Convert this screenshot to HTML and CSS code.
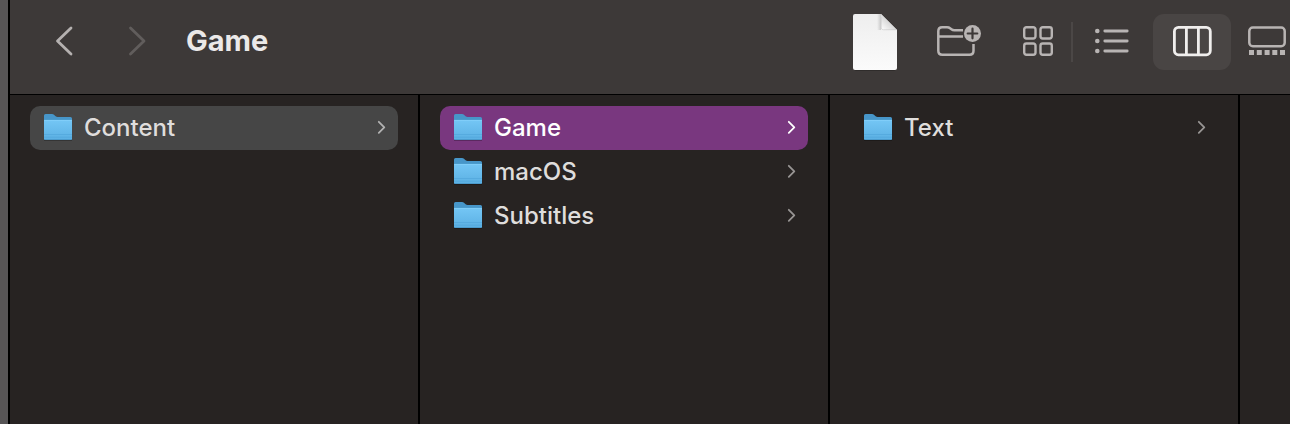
FILE: index.html
```html
<!DOCTYPE html>
<html lang="en">
<head>
<meta charset="utf-8">
<title>Game</title>
<link rel="stylesheet" href="styles.css">
</head>
<body>
<svg class="defs" aria-hidden="true">
  <defs>
    <linearGradient id="front" x1="0" y1="0" x2="0" y2="1">
      <stop offset="0" stop-color="#74c6f5"/>
      <stop offset="1" stop-color="#5bb0e3"/>
    </linearGradient>
    <linearGradient id="paper" x1="0" y1="0" x2="0" y2="1">
      <stop offset="0" stop-color="#eeeeee"/>
      <stop offset="1" stop-color="#fbfbfb"/>
    </linearGradient>
    <linearGradient id="fold" x1="0" y1="1" x2="1" y2="0">
      <stop offset="0" stop-color="#ffffff"/>
      <stop offset=".5" stop-color="#d8d8d8"/>
      <stop offset="1" stop-color="#e4e4e4"/>
    </linearGradient>
    <linearGradient id="shade" x1="1" y1="0" x2="0" y2="0">
      <stop offset="0" stop-color="#000" stop-opacity=".16"/>
      <stop offset="1" stop-color="#000" stop-opacity="0"/>
    </linearGradient>
    <symbol id="folder" viewBox="0 0 30 30">
      <path d="M1 26.500h28v1.200H1z" fill="#000" opacity=".35"/>
      <path d="M1 2.500Q1 1 2.500 1H9q1.200 0 2 .8l1.600 1.400q.9.800 2 .8H27.500Q29 4 29 5.500V20H1z" fill="#4796c9"/>
      <path d="M1 7.500Q1 7 1.800 7H28.200q.8 0 .8.500V25.500Q29 27 27.500 27h-25Q1 27 1 25.500z" fill="url(#front)"/>
      <path d="M1 7.400h28" stroke="#86d0fa" stroke-width=".8"/>
      <path d="M1 21.500h28M1 24.200h28" stroke="#4fa4d8" stroke-width=".6"/>
      <path d="M1.500 26.500h27" stroke="#4a97c8" stroke-width=".9"/>
    </symbol>
    <symbol id="chevron" viewBox="0 0 10 16">
      <path d="M1.800 1.800 7.300 7.300 1.800 12.800" fill="none" stroke="currentColor" stroke-width="1.800" stroke-linecap="round" stroke-linejoin="round"/>
    </symbol>
  </defs>
</svg>
<main class="window">
  <header class="toolbar">
    <nav class="history" aria-label="History">
      <button class="nav" aria-label="Back"><svg width="20" height="32" viewBox="0 0 20 32"><path d="M16 2 2.500 15 16 28" class="line thick"/></svg></button>
      <button class="nav" aria-label="Forward" disabled><svg width="20" height="32" viewBox="0 0 20 32"><path d="M3.500 2 17 15 3.500 28" class="line thick"/></svg></button>
    </nav>
    <h1 class="title">Game</h1>
    <div class="tools">
      <button class="tool document" aria-label="Document">
        <svg width="44" height="58" viewBox="0 0 44 58">
          <path d="M1 3v52.700q0 2 2 2h38q2 0 2-2V18" fill="#000" opacity=".3"/>
          <path d="M2 1H28L44 17V55q0 2-2 2H2q-2 0-2-2V3q0-2 2-2z" fill="url(#paper)"/>
          <path d="M24 1h4v16h-4z" fill="url(#shade)"/>
          <path d="M28 1v14q0 2 2 2h14z" fill="url(#fold)"/>
          <path d="M28.300 4v11q0 1.700 2 1.700h13" fill="none" stroke="#c8c8c8" stroke-width=".6"/>
        </svg>
      </button>
      <button class="tool new-folder" aria-label="New folder">
        <svg width="44" height="34" viewBox="0 0 44 34">
          <path d="M26 5.200H17.500c-1.500 0-2.200-.3-3.100-1l-1.300-.9C12.200 2.500 11.500 2.200 10 2.200H5.200Q1.300 2.200 1.300 6.200V25.800q0 4 4 4h27.200q4 0 4-4V19M1.500 11.500H26" fill="none" stroke="currentColor" stroke-width="2.500"/>
          <circle cx="35.500" cy="8.500" r="8.500" fill="currentColor"/>
          <path d="M35.500 3.700v9.600M30.700 8.500h9.600" stroke="#3d3938" stroke-width="2.200" stroke-linecap="round"/>
        </svg>
      </button>
      <button class="tool grid" aria-label="Icon view">
        <svg width="30" height="32" viewBox="0 0 30 32" class="line">
          <rect x="1.200" y="1.200" width="11.300" height="11.300" rx="2.200"/>
          <rect x="17.500" y="1.200" width="11.300" height="11.300" rx="2.200"/>
          <rect x="1.200" y="17.500" width="11.300" height="11.300" rx="2.200"/>
          <rect x="17.500" y="17.500" width="11.300" height="11.300" rx="2.200"/>
        </svg>
      </button>
      <span class="divider"></span>
      <button class="tool list" aria-label="List view">
        <svg width="34" height="28" viewBox="0 0 34 28">
          <g fill="currentColor"><circle cx="2.300" cy="3" r="2.300"/><circle cx="2.300" cy="13" r="2.300"/><circle cx="2.300" cy="23" r="2.300"/></g>
          <path d="M9.800 3H32.200M9.800 13H32.200M9.800 23H32.200" class="line bars"/>
        </svg>
      </button>
      <button class="tool columns-view" aria-label="Column view" aria-pressed="true">
        <svg width="40" height="34" viewBox="0 0 40 34" class="line thick">
          <rect x="2.400" y="2.400" width="35.900" height="27.400" rx="4"/>
          <path d="M14.400 2.500v27M26.400 2.500v27"/>
        </svg>
      </button>
      <button class="tool gallery" aria-label="Gallery view">
        <svg width="38" height="32" viewBox="0 0 38 32">
          <rect x="1.300" y="1.500" width="35.400" height="18.700" rx="3.500" fill="none" stroke="currentColor" stroke-width="2.500"/>
          <path d="M1 24h5v5H1zM8.800 24h5v5h-5zM16.600 24h5v5h-5zM24.300 24h5v5h-5zM32 24h5v5h-5z" fill="currentColor"/>
        </svg>
      </button>
    </div>
  </header>
  <div class="browser">
    <ul class="column">
      <li><button class="row open"><svg class="icon"><use href="#folder"/></svg><span class="name">Content</span><svg class="chevron"><use href="#chevron"/></svg></button></li>
    </ul>
    <ul class="column">
      <li><button class="row selected"><svg class="icon"><use href="#folder"/></svg><span class="name">Game</span><svg class="chevron"><use href="#chevron"/></svg></button></li>
      <li><button class="row"><svg class="icon"><use href="#folder"/></svg><span class="name">macOS</span><svg class="chevron"><use href="#chevron"/></svg></button></li>
      <li><button class="row"><svg class="icon"><use href="#folder"/></svg><span class="name">Subtitles</span><svg class="chevron"><use href="#chevron"/></svg></button></li>
    </ul>
    <ul class="column">
      <li><button class="row"><svg class="icon"><use href="#folder"/></svg><span class="name">Text</span><svg class="chevron"><use href="#chevron"/></svg></button></li>
    </ul>
    <div class="rest"></div>
  </div>
</main>
</body>
</html>
```
FILE: styles.css
```css
* {
  box-sizing: border-box;
}

body {
  margin: 0;
  background: #575556;
  color: #dfdddc;
  font-family: Inter, Roboto, sans-serif;
}

button {
  padding: 0;
  border: 0;
  background: none;
  color: inherit;
  font: inherit;
}

svg {
  display: block;
  flex: none;
}

.defs {
  position: absolute;
  width: 0;
  height: 0;
}

.line {
  fill: none;
  stroke: currentColor;
  stroke-width: 2.4px;
  stroke-linecap: round;
  stroke-linejoin: round;
}

.line.thick {
  stroke-width: 2.8px;
}

.line.bars {
  stroke-width: 2.8px;
}

.window {
  display: flex;
  flex-direction: column;
  min-height: 100vh;
  margin-left: 8px;
  border-left: 2px solid #000;
  background: #272322;
}

.toolbar {
  display: flex;
  align-items: center;
  padding: 12px 4px 22px 45px;
  border-bottom: 1px solid #000;
  background: #3d3938;
}

.history {
  display: flex;
  gap: 52px;
}

.nav {
  color: #b5b1b0;
}

.nav:disabled {
  color: #615d5c;
}

.title {
  flex: 1;
  margin: 0 0 0 39px;
  padding-bottom: 2px;
  color: #ebe9e8;
  font-size: 29px;
  font-weight: 700;
  line-height: 36px;
}

.tools {
  display: flex;
  align-items: center;
  height: 60px;
  color: #b8b4b3;
}

.new-folder {
  margin-left: 40px;
}

.grid {
  margin-left: 42px;
}

.divider {
  width: 2px;
  height: 40px;
  margin: 0 22px 0 18px;
  background: #4b4746;
}

.columns-view {
  display: flex;
  align-items: center;
  justify-content: center;
  width: 78px;
  height: 56px;
  margin: 0 17px 0 24px;
  border-radius: 11px;
  background: #494544;
  color: #f0eeed;
}

.browser {
  display: flex;
  flex: 1;
}

.column {
  flex: 0 0 410px;
  margin: 0;
  padding: 11px 20px;
  border-right: 2px solid #000;
  list-style: none;
}

.rest {
  flex: 1;
}

.row {
  display: flex;
  align-items: center;
  gap: 11px;
  width: 100%;
  height: 44px;
  padding: 0 11px 0 13px;
  border-radius: 10px;
  font-size: 24px;
  font-weight: 500;
  line-height: 30px;
  text-align: left;
}

.row.open {
  background: #464646;
}

.row.selected {
  background: #79377f;
  color: #fff;
}

.icon {
  width: 30px;
  height: 30px;
}

.name {
  flex: 1;
}

.chevron {
  width: 10px;
  height: 16px;
  color: #989594;
}

.open .chevron {
  color: #b2b2b2;
}

.selected .chevron {
  color: #fff;
}
```
